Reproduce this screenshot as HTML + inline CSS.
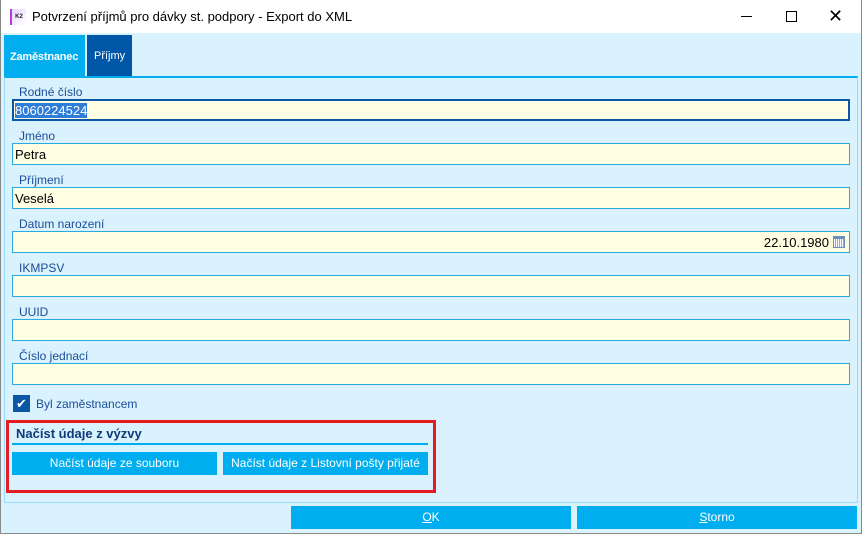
<!DOCTYPE html><html><head><meta charset="utf-8"><style>
*{box-sizing:border-box;margin:0;padding:0}
body{width:862px;height:534px;overflow:hidden;font-family:"Liberation Sans",sans-serif;background:#d9f2fd;position:relative}
.a{position:absolute}
.win{left:0;top:0;width:862px;height:534px;border:1px solid #8a8a8a;border-top:none}
.lbl{font-size:12px;color:#1a4d99;left:19px}
.inp{left:12px;width:838px;height:22px;background:#fffee3;border:1px solid #29abe2;font-size:13px;padding:3px 2px;color:#000}
.btn{background:#00aeef;color:#fff;font-size:12px;text-align:center;line-height:23px;height:23px}
</style></head><body>
<div class="a win"></div>
<div class="a" style="left:1px;top:0;width:860px;height:33px;background:#fff"></div>
<div class="a" style="left:10px;top:9px;width:16px;height:16px;background:linear-gradient(135deg,#e8d8ff,#fff);border-left:2px solid #b03fd0;font-size:6px;font-weight:bold;line-height:16px;text-align:center;color:#222">K2</div>
<div class="a" style="left:32px;top:9px;font-size:13px;color:#000">Potvrzení příjmů pro dávky st. podpory - Export do XML</div>
<div class="a" style="left:741px;top:16px;width:11px;height:1px;background:#000"></div>
<div class="a" style="left:786px;top:11px;width:11px;height:11px;border:1px solid #000"></div>
<div class="a" style="left:828px;top:6px;font-size:18px;color:#000">✕</div>
<div class="a" style="left:4px;top:35px;width:81px;height:42px;background:#00aeef;color:#fff;font-size:11px;font-weight:bold;line-height:44px;padding-left:6px;letter-spacing:-0.2px;white-space:nowrap">Zaměstnanec</div>
<div class="a" style="left:87px;top:35px;width:45px;height:41px;background:#0057a8;color:#fff;font-size:11px;line-height:43px;padding-left:7px">Příjmy</div>
<div class="a" style="left:4px;top:76px;width:854px;height:427px;border:1px solid #9adcf5;border-top:2px solid #00aeef"></div>
<div class="a lbl" style="top:85px">Rodné číslo</div>
<div class="a inp" style="top:99px;border:2px solid #0a57a5;padding:2px 1px"><span style="background:#2f7ddb;color:#fff">8060224524</span></div>
<div class="a lbl" style="top:129px">Jméno</div>
<div class="a inp" style="top:143px">Petra</div>
<div class="a lbl" style="top:173px">Příjmení</div>
<div class="a inp" style="top:187px">Veselá</div>
<div class="a lbl" style="top:217px">Datum narození</div>
<div class="a inp" style="top:231px;text-align:right;padding-right:20px">22.10.1980</div>
<div class="a" style="left:833px;top:236px;width:12px;height:12px;border:1px solid #6a8fb8;border-top:3px solid #6a8fb8;background:repeating-linear-gradient(90deg,#fff 0 1px,#9ab 1px 2px)"></div>
<div class="a lbl" style="top:261px">IKMPSV</div>
<div class="a inp" style="top:275px"></div>
<div class="a lbl" style="top:305px">UUID</div>
<div class="a inp" style="top:319px"></div>
<div class="a lbl" style="top:349px">Číslo jednací</div>
<div class="a inp" style="top:363px"></div>
<div class="a" style="left:13px;top:395px;width:17px;height:17px;background:#0a57a5;color:#fff;font-size:13px;text-align:center;line-height:17px">✔</div>
<div class="a" style="left:36px;top:397px;font-size:12px;color:#1a4d99">Byl zaměstnancem</div>
<div class="a" style="left:6px;top:420px;width:430px;height:73px;border:3px solid #e31b23"></div>
<div class="a" style="left:16px;top:426px;font-size:13px;font-weight:bold;color:#0e3a7a">Načíst údaje z výzvy</div>
<div class="a" style="left:12px;top:443px;width:416px;height:2px;background:#00aeef"></div>
<div class="a btn" style="left:12px;top:452px;width:205px">Načíst údaje ze souboru</div>
<div class="a btn" style="left:223px;top:452px;width:205px">Načíst údaje z Listovní pošty přijaté</div>
<div class="a btn" style="left:291px;top:506px;width:280px"><u>O</u>K</div>
<div class="a btn" style="left:577px;top:506px;width:280px"><u>S</u>torno</div>
</body></html>
